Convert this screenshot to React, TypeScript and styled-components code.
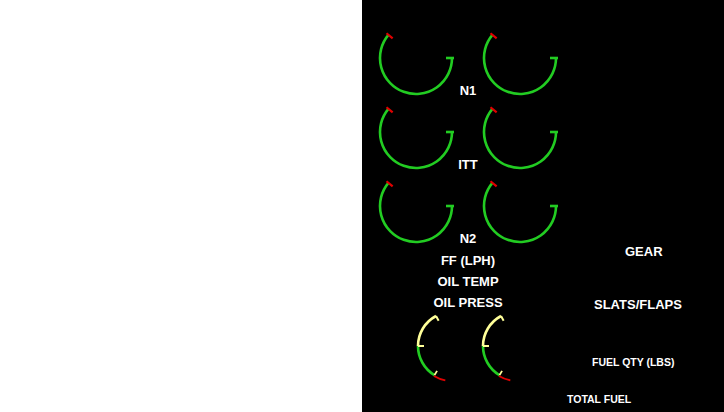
import styled, { createGlobalStyle } from 'styled-components';

const GREEN = '#22cc22';
const RED = '#e00000';
const YELLOW = '#ffff99';

const GlobalStyle = createGlobalStyle`
  html, body {
    margin: 0;
    padding: 0;
    background: #fff;
  }
  body {
    font-family: "Liberation Sans", Arial, sans-serif;
  }
`;

const Page = styled.div`
  display: flex;
  width: 724px;
  height: 412px;
  overflow: hidden;
`;

const Blank = styled.div`
  flex: 0 0 362px;
  background: #fff;
`;

const Panel = styled.div`
  flex: 0 0 362px;
  display: flex;
  background: #000;
  color: #fff;
`;

const EngineColumn = styled.div`
  flex: 0 0 184px;
  display: flex;
  flex-direction: column;
  padding: 31px 0 0 14px;
`;

const GaugeRows = styled.div`
  display: flex;
  flex-direction: column;
  gap: 8px;
`;

const GaugeRow = styled.div`
  display: grid;
  grid-template-columns: 80px 24px 80px;
  align-items: end;
`;

const Label = styled.div`
  font-weight: 700;
  font-size: 13px;
  line-height: 13px;
  text-align: center;
  white-space: nowrap;
`;

const LabelStack = styled.div`
  display: flex;
  flex-direction: column;
  margin-top: 5px;
  ${Label} {
    line-height: 21px;
  }
`;

const OilRow = styled.div`
  display: flex;
  gap: 25px;
  padding-left: 40px;
  margin-top: 2px;
  svg {
    overflow: visible;
  }
`;

const SystemColumn = styled.div`
  flex: 1;
  display: flex;
  flex-direction: column;
  align-items: flex-start;
  padding: 244px 0 0 0;
`;

const SysLabel = styled.div<{ $indent: number; $gap: number; $small?: boolean }>`
  margin-left: ${(p) => p.$indent}px;
  margin-top: ${(p) => p.$gap}px;
  font-weight: 700;
  font-size: ${(p) => (p.$small ? '10.5px' : '13px')};
  line-height: ${(p) => (p.$small ? '14px' : '16px')};
  white-space: nowrap;
`;

const pt = (cx: number, cy: number, r: number, deg: number) => {
  const a = (deg * Math.PI) / 180;
  return [cx + r * Math.cos(a), cy + r * Math.sin(a)];
};

const arc = (cx: number, cy: number, r: number, from: number, to: number) => {
  const [x1, y1] = pt(cx, cy, r, from);
  const [x2, y2] = pt(cx, cy, r, to);
  const large = Math.abs(from - to) > 180 ? 1 : 0;
  return `M${x1.toFixed(2)} ${y1.toFixed(2)} A${r} ${r} 0 ${large} 0 ${x2.toFixed(2)} ${y2.toFixed(2)}`;
};

const tick = (cx: number, cy: number, r1: number, r2: number, deg: number) => {
  const [x1, y1] = pt(cx, cy, r1, deg);
  const [x2, y2] = pt(cx, cy, r2, deg);
  return `M${x1.toFixed(2)} ${y1.toFixed(2)} L${x2.toFixed(2)} ${y2.toFixed(2)}`;
};

// round engine gauge: N1 / ITT / N2
const RoundGauge = () => {
  const cx = 40;
  const cy = 27;
  return (
    <svg width="80" height="66" viewBox="0 0 80 66">
      <path d={arc(cx, cy, 36, 220, 0.01)} fill="none" stroke={GREEN} strokeWidth="2.6" />
      <path d={tick(cx, cy, 30, 38, 0)} stroke={GREEN} strokeWidth="2.6" />
      <path d={tick(cx, cy, 30.5, 38.5, 220)} stroke={RED} strokeWidth="2.2" />
    </svg>
  );
};

// oil gauge: a side arc, yellow / green / red
const OilGauge = () => {
  const cx = 36;
  const cy = 31;
  const r = 34;
  return (
    <svg width="40" height="70" viewBox="0 0 40 70">
      <path d={arc(cx, cy, r, 242, 180)} fill="none" stroke={YELLOW} strokeWidth="2.6" />
      <path d={arc(cx, cy, r, 180, 121)} fill="none" stroke={GREEN} strokeWidth="2.6" />
      <path d={arc(cx, cy, r + 1, 121, 101)} fill="none" stroke={RED} strokeWidth="2" />
      <path d={tick(cx, cy, 34, 28.5, 242)} stroke={YELLOW} strokeWidth="2" />
      <path d={tick(cx, cy, 34, 28, 180)} stroke={YELLOW} strokeWidth="2" />
      <path d={tick(cx, cy, 34, 29, 121)} stroke={YELLOW} strokeWidth="1.8" />
    </svg>
  );
};

const rows = ['N1', 'ITT', 'N2'];

export default function App() {
  return (
    <>
      <GlobalStyle />
      <Page>
        <Blank />
        <Panel>
          <EngineColumn>
            <GaugeRows>
              {rows.map((name) => (
                <GaugeRow key={name}>
                  <RoundGauge />
                  <Label>{name}</Label>
                  <RoundGauge />
                </GaugeRow>
              ))}
            </GaugeRows>
            <LabelStack>
              <Label>FF (LPH)</Label>
              <Label>OIL TEMP</Label>
              <Label>OIL PRESS</Label>
            </LabelStack>
            <OilRow>
              <OilGauge />
              <OilGauge />
            </OilRow>
          </EngineColumn>
          <SystemColumn>
            <SysLabel $indent={65} $gap={0}>GEAR</SysLabel>
            <SysLabel $indent={34} $gap={37}>SLATS/FLAPS</SysLabel>
            <SysLabel $indent={32} $gap={42} $small>FUEL QTY (LBS)</SysLabel>
            <SysLabel $indent={7} $gap={23} $small>TOTAL FUEL</SysLabel>
          </SystemColumn>
        </Panel>
      </Page>
    </>
  );
}
